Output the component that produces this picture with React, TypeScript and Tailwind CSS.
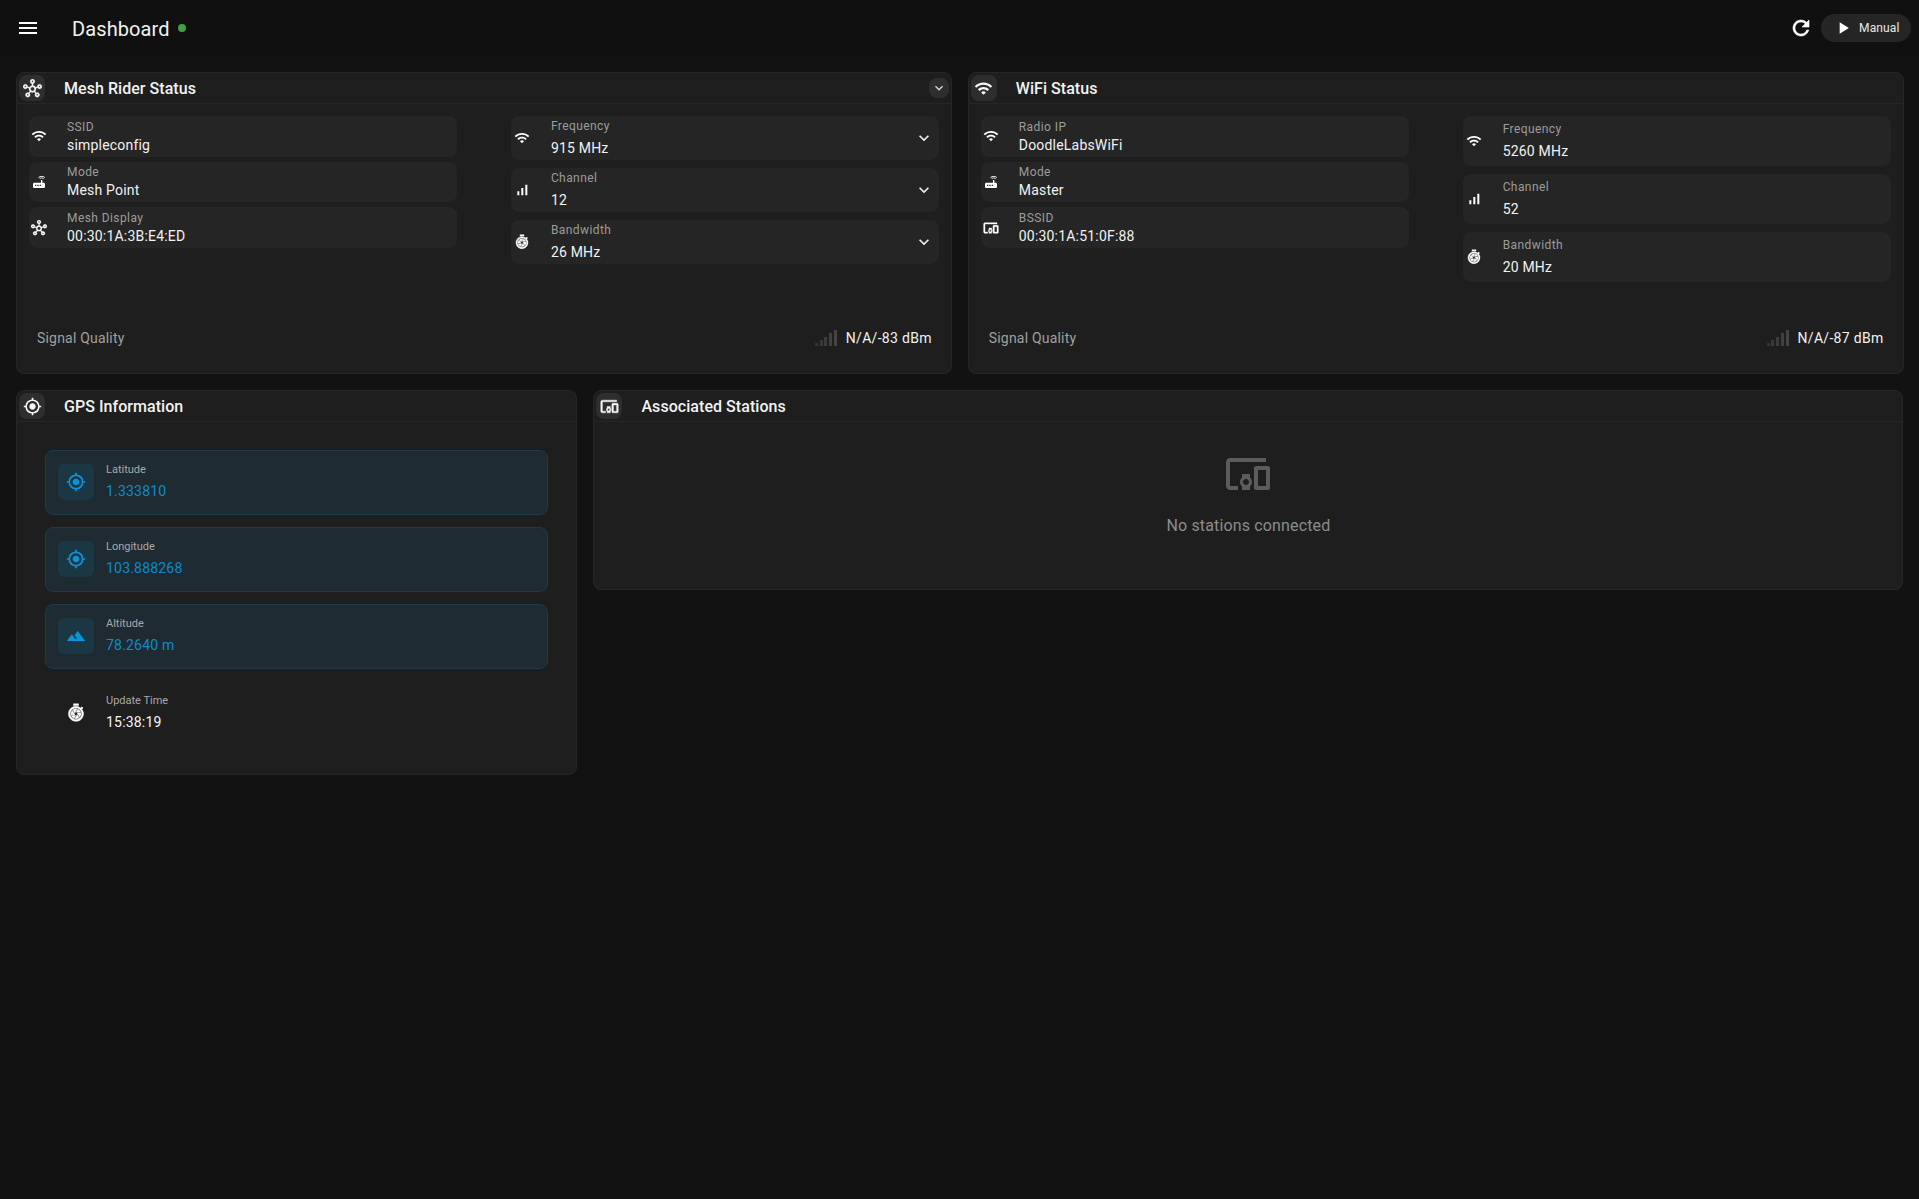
import { ReactNode } from 'react'
import {
  MdDevicesOther,
  MdExpandMore,
  MdGpsFixed,
  MdMenu,
  MdOutlineHub,
  MdPlayArrow,
  MdRefresh,
  MdRouter,
  MdShutterSpeed,
  MdSignalCellularAlt,
  MdTerrain,
  MdWifi,
} from 'react-icons/md'

interface RowProps {
  icon: ReactNode
  label: string
  value: string
  tight?: boolean
  tall?: boolean
  select?: boolean
}

const StatRow = ({ icon, label, value, tight, tall, select }: RowProps) => {
  if (tight) {
    return (
      <div className="flex h-[40.67px] items-center rounded-lg bg-[#252525] pl-px">
        <div className="flex w-[18px] justify-center">{icon}</div>
        <div className="ml-[19px] flex flex-col pt-[1.5px]">
          <span className="text-xs leading-[15px] tracking-[0.42px] text-[#9c9c9c]">{label}</span>
          <span className="text-sm leading-[20px] font-[450] tracking-[0.2px] text-[#f2f2f2]">{value}</span>
        </div>
      </div>
    )
  }
  return (
    <div className={`flex items-center rounded-lg bg-[#252525] pr-[5px] pl-[2px] ${tall ? 'h-[50px]' : 'h-[44px]'}`}>
      <div className="flex w-[18px] justify-center">{icon}</div>
      <div className="ml-5 flex flex-1 flex-col pb-px">
        <span className="text-xs leading-4 tracking-[0.42px] text-[#9c9c9c]">{label}</span>
        <span className="mt-1 text-sm leading-5 font-[450] tracking-[0.2px] text-[#f2f2f2]">{value}</span>
      </div>
      {select && <MdExpandMore className="h-5 w-5 text-[#f0f0f0]" />}
    </div>
  )
}

const CardHeader = ({ icon, title, toggle }: { icon: ReactNode; title: string; toggle?: boolean }) => (
  <div className="flex h-[31px] items-center border-b border-[#262626] pr-[2px] pl-[2px]">
    <div className="flex h-[26px] w-[26px] items-center justify-center rounded-lg bg-[#2e2e2e]">{icon}</div>
    <h2 className="ml-[19px] flex-1 pt-[1px] text-base font-medium tracking-[0.05px] text-[#f2f2f2]">{title}</h2>
    {toggle && (
      <div className="flex h-5 w-5 items-center justify-center rounded-lg bg-[#2e2e2e]">
        <MdExpandMore className="h-4 w-4 text-[#d8d8d8]" />
      </div>
    )}
  </div>
)

const SignalBars = () => (
  <div className="flex h-4 items-end gap-[1.75px]">
    <div className="h-[3px] w-[3px] bg-[#333333]" />
    <div className="h-[6.5px] w-[3px] bg-[#383838]" />
    <div className="h-[9.5px] w-[3px] bg-[#3c3c3c]" />
    <div className="h-[13px] w-[3px] bg-[#404040]" />
    <div className="h-4 w-[3px] bg-[#444444]" />
  </div>
)

const SignalQuality = ({ value }: { value: string }) => (
  <div className="mt-auto mb-[25px] flex h-5 items-center justify-between pr-[19px] pl-5">
    <span className="text-sm tracking-[0.2px] text-[#a0a0a0]">Signal Quality</span>
    <div className="flex items-center gap-[9px]">
      <SignalBars />
      <span className="text-sm font-[450] tracking-[0.3px] text-[#f2f2f2]">{value}</span>
    </div>
  </div>
)

interface GpsProps {
  icon: ReactNode
  label: string
  value: string
  plain?: boolean
}

const GpsItem = ({ icon, label, value, plain }: GpsProps) => (
  <div
    className={`flex h-[65px] items-center gap-3 rounded-lg border px-3 ${
      plain ? 'border-[#1f1f1f] bg-[#1e1e1e]' : 'border-[#1b3a4b] bg-[#1e2b33]'
    }`}
  >
    <div className={`flex h-9 w-9 items-center justify-center rounded-md ${plain ? '' : 'bg-[#1c3744]'}`}>{icon}</div>
    <div className="flex flex-col pb-px">
      <span className="text-[11px] leading-[15px] text-[#a8a8a8]">{label}</span>
      <span
        className={`mt-1 text-sm leading-5 tracking-[0.2px] ${plain ? 'font-[450] text-[#f5f5f5]' : 'text-[#0f8acb]'}`}
      >
        {value}
      </span>
    </div>
  </div>
)

// the filled icons carry a transparent bounding path, so the stroke must skip it
const bolder = 'stroke-[0.6px] [&>path[fill=none]]:stroke-none'
const slight = 'stroke-[0.3px] [&>path[fill=none]]:stroke-none'
const white = 'h-4 w-4 text-white'
const bold = `h-4 w-4 text-white ${bolder}`
const head = 'h-[19px] w-[19px] text-[#f5f5f5]'
const blue = 'h-5 w-5 text-[#0d93d9]'

export default function App() {
  return (
    <div className="min-h-[1199px] bg-[#121212] font-['Roboto',sans-serif] text-white">
      <header className="flex h-14 items-center bg-[#101010] pr-2 pl-4">
        <MdMenu className="h-6 w-6 text-white" />
        <h1 className="ml-8 pt-[2px] text-xl tracking-[0.1px] text-[#f2f2f2]">Dashboard</h1>
        <span className="ml-2 h-2 w-2 rounded-full bg-[#43a047]" />
        <MdRefresh className={`mr-2 ml-auto h-6 w-6 text-white ${bolder}`} />
        <div className="flex h-7 w-[90px] items-center rounded-full bg-[#252525] pl-[12px]">
          <MdPlayArrow className="h-5 w-5 text-white" />
          <span className="ml-[6px] text-xs font-[450] tracking-[0.15px] text-[#e8e8e8]">Manual</span>
        </div>
      </header>

      <main className="flex flex-col gap-4 py-4 pr-[15.5px] pl-4">
        <div className="grid grid-cols-2 gap-4">
          <section className="flex flex-col rounded-lg border border-[#262626] bg-[#1e1e1e]">
            <CardHeader icon={<MdOutlineHub className={`${head} ${slight}`} />} title="Mesh Rider Status" toggle />
            <div className="grid grid-cols-2 items-start gap-x-[54px] px-3 pt-3">
              <div className="flex flex-col gap-[5px]">
                <StatRow tight icon={<MdWifi className={white} />} label="SSID" value="simpleconfig" />
                <StatRow tight icon={<MdRouter className={white} />} label="Mode" value="Mesh Point" />
                <StatRow tight icon={<MdOutlineHub className={`${white} ${slight}`} />} label="Mesh Display" value="00:30:1A:3B:E4:ED" />
              </div>
              <div className="flex flex-col gap-2">
                <StatRow select icon={<MdWifi className={white} />} label="Frequency" value="915 MHz" />
                <StatRow select icon={<MdSignalCellularAlt className={white} />} label="Channel" value="12" />
                <StatRow select icon={<MdShutterSpeed className={bold} />} label="Bandwidth" value="26 MHz" />
              </div>
            </div>
            <SignalQuality value="N/A/-83 dBm" />
          </section>

          <section className="flex flex-col rounded-lg border border-[#262626] bg-[#1e1e1e]">
            <CardHeader icon={<MdWifi className={head} />} title="WiFi Status" />
            <div className="grid grid-cols-2 items-start gap-x-[54px] px-3 pt-3">
              <div className="flex flex-col gap-[5px]">
                <StatRow tight icon={<MdWifi className={white} />} label="Radio IP" value="DoodleLabsWiFi" />
                <StatRow tight icon={<MdRouter className={white} />} label="Mode" value="Master" />
                <StatRow tight icon={<MdDevicesOther className={bold} />} label="BSSID" value="00:30:1A:51:0F:88" />
              </div>
              <div className="flex flex-col gap-2">
                <StatRow tall icon={<MdWifi className={white} />} label="Frequency" value="5260 MHz" />
                <StatRow tall icon={<MdSignalCellularAlt className={white} />} label="Channel" value="52" />
                <StatRow tall icon={<MdShutterSpeed className={bold} />} label="Bandwidth" value="20 MHz" />
              </div>
            </div>
            <div className="h-[46px] shrink-0" />
            <SignalQuality value="N/A/-87 dBm" />
          </section>
        </div>

        <div className="grid grid-cols-[3fr_7fr] items-start gap-4">
          <section className="rounded-lg border border-[#262626] bg-[#1e1e1e]">
            <CardHeader icon={<MdGpsFixed className={head} />} title="GPS Information" />
            <div className="flex flex-col gap-3 px-7 pt-[27.5px] pb-[28.5px]">
              <GpsItem icon={<MdGpsFixed className={blue} />} label="Latitude" value="1.333810" />
              <GpsItem icon={<MdGpsFixed className={blue} />} label="Longitude" value="103.888268" />
              <GpsItem icon={<MdTerrain className={blue} />} label="Altitude" value="78.2640 m" />
              <GpsItem plain icon={<MdShutterSpeed className={`h-5 w-5 text-white ${bolder}`} />} label="Update Time" value="15:38:19" />
            </div>
          </section>

          <section className="h-[200px] rounded-lg border border-[#262626] bg-[#1e1e1e]">
            <CardHeader icon={<MdDevicesOther className={`${head} ${bolder}`} />} title="Associated Stations" />
            <div className="flex flex-col items-center pt-[28px]">
              <MdDevicesOther className="h-12 w-12 text-[#5c5c5c]" />
              <p className="mt-4 text-base tracking-[0.15px] text-[#8c8c8c]">No stations connected</p>
            </div>
          </section>
        </div>
      </main>
    </div>
  )
}
